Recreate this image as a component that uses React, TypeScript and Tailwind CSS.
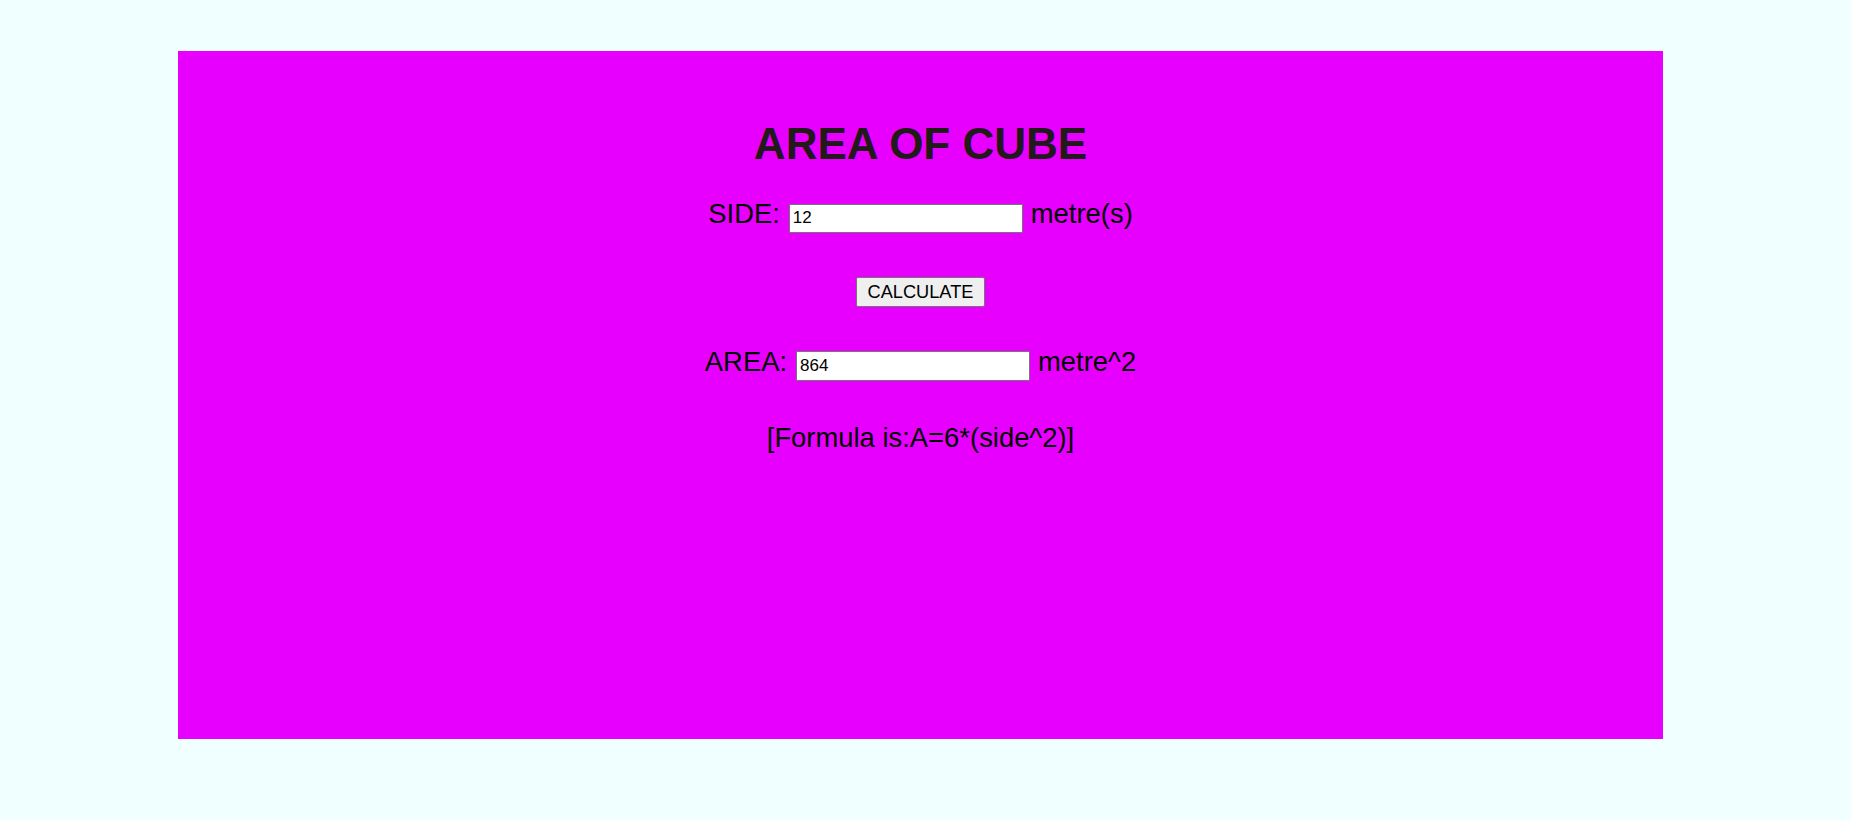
import React from "react";

export default function App() {
  return (
    <div className="min-h-screen w-full bg-[#F0FFFF] pt-[51px] font-['Liberation_Sans',Arial,sans-serif] text-black">
      <div className="ml-[178px] w-[1485px] h-[688px] bg-[#E800FF] flex flex-col items-center">
        <h1 className="mt-[67.5px] text-[44px] leading-[50px] font-bold text-[#221a1a]">
          AREA OF CUBE
        </h1>
        <div className="mt-[29.5px] flex items-baseline">
          <span className="text-[27.4px] leading-[31px]">SIDE:</span>
          <input
            type="text"
            defaultValue="12"
            className="ml-[9px] w-[234px] h-[29px] border border-[#767676] bg-white px-[3px] text-[17px] leading-[19px] text-black font-['Liberation_Sans',Arial,sans-serif] outline-none"
          />
          <span className="ml-[8px] text-[27.4px] leading-[31px]">metre(s)</span>
        </div>
        <button className="mt-[44px] w-[129px] h-[30px] border border-[#767676] rounded-[2px] bg-[#EFEFEF] text-[18.2px] leading-[20px] text-black font-['Liberation_Sans',Arial,sans-serif]">
          CALCULATE
        </button>
        <div className="mt-[39.6px] flex items-baseline">
          <span className="text-[27.4px] leading-[31px]">AREA:</span>
          <input
            type="text"
            defaultValue="864"
            className="ml-[9px] w-[234px] h-[30px] border border-[#767676] bg-white px-[3px] text-[17px] leading-[19px] text-black font-['Liberation_Sans',Arial,sans-serif] outline-none"
          />
          <span className="ml-[8px] text-[27.4px] leading-[31px]">metre^2</span>
        </div>
        <div className="mt-[41px] text-[27.4px] leading-[31px]">[Formula is:A=6*(side^2)]</div>
      </div>
    </div>
  );
}
